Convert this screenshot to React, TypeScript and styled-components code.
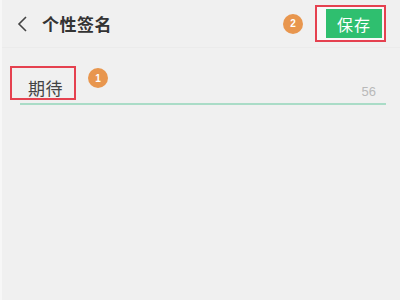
import React from "react";
import styled, { createGlobalStyle } from "styled-components";

const Global = createGlobalStyle`
  html, body { margin: 0; padding: 0; background: #f0f0f0; }
  body { font-family: "Noto Sans CJK SC", "Noto Sans", sans-serif; }
`;

const Page = styled.div`
  width: 400px;
  height: 300px;
  background: #f0f0f0;
  border-left: 2px solid #f7f7f7;
  box-sizing: border-box;
  position: relative;
  overflow: hidden;
`;

const Header = styled.div`
  height: 48px;
  display: flex;
  align-items: center;
  padding: 0 14px 0 14px;
  border-bottom: 1px solid #ebebeb;
  box-sizing: border-box;
`;

const Back = styled.svg`
  width: 12px;
  height: 18px;
  margin-right: 14px;
`;

const Title = styled.div`
  font-size: 17px;
  font-weight: 700;
  color: #333;
  flex: 1;
  letter-spacing: 0.5px;
`;

const Badge = styled.div`
  width: 20px;
  height: 20px;
  border-radius: 50%;
  background: #e8964e;
  color: #fff;
  font-family: "Liberation Sans", sans-serif;
  font-weight: 700;
  font-size: 10px;
  display: flex;
  align-items: center;
  justify-content: center;
`;

const Highlight = styled.div`
  border: 2px solid #e5414f;
  box-sizing: border-box;
`;

const SaveBox = styled(Highlight)`
  margin-left: 12px;
  width: 71px;
  height: 37px;
  padding: 2px 2px 2px 9px;
  background: #f8f8f8;
  display: flex;
`;

const SaveButton = styled.div`
  flex: 1;
  background: #2fbf6f;
  color: #fff;
  font-size: 16px;
  display: flex;
  align-items: center;
  justify-content: center;
  letter-spacing: 1px;
`;

const Field = styled.div`
  margin: 17px 14px 0 18px;
  height: 38px;
  border-bottom: 2px solid #aadcc7;
  display: flex;
  align-items: flex-start;
  position: relative;
`;

const InputBox = styled(Highlight)`
  position: absolute;
  left: -10px;
  top: 1px;
  width: 66px;
  height: 34px;
`;

const Value = styled.div`
  font-size: 17px;
  color: #444;
  margin-top: 10px;
  margin-left: 8px;
  letter-spacing: 0.5px;
`;

const FieldBadge = styled(Badge)`
  margin-left: 25px;
  margin-top: 3px;
`;

const Count = styled.div`
  margin-left: auto;
  margin-top: 19px;
  margin-right: 10px;
  font-family: "Liberation Sans", sans-serif;
  font-size: 13px;
  color: #b9b9b9;
`;

export default function App() {
  return (
    <>
      <Global />
      <Page>
        <Header>
          <Back viewBox="0 0 12 18">
            <path d="M10 2 L3 9 L10 16" fill="none" stroke="#444" strokeWidth="1.6" />
          </Back>
          <Title>个性签名</Title>
          <Badge>2</Badge>
          <SaveBox>
            <SaveButton>保存</SaveButton>
          </SaveBox>
        </Header>
        <Field>
          <InputBox />
          <Value>期待</Value>
          <FieldBadge>1</FieldBadge>
          <Count>56</Count>
        </Field>
      </Page>
    </>
  );
}
